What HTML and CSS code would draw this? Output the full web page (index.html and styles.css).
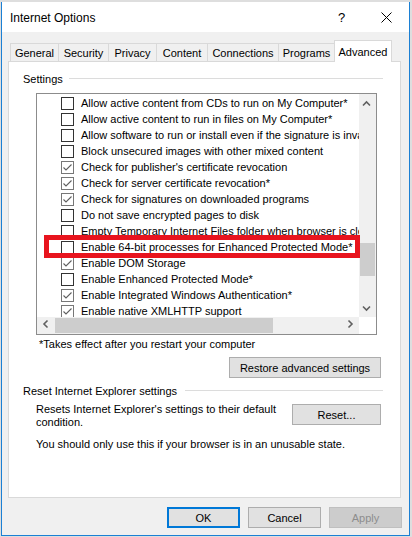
FILE: index.html
```html
<!DOCTYPE html>
<html lang="en">
<head>
<meta charset="utf-8">
<title>Internet Options</title>
<link rel="stylesheet" href="styles.css">
</head>
<body>
<div class="window">
  <div class="titlebar">
    <span class="title">Internet Options</span>
    <span class="cbtn help">?</span>
    <span class="cbtn close">
      <svg width="11" height="11" viewBox="0 0 11 11"><path d="M0.5 0.5 L10.5 10.5 M10.5 0.5 L0.5 10.5" stroke="#000" stroke-width="1" fill="none"/></svg>
    </span>
  </div>
  <div class="client">
    <div class="tabs">
      <div class="tab w-general">General</div>
      <div class="tab w-security">Security</div>
      <div class="tab w-privacy">Privacy</div>
      <div class="tab w-content">Content</div>
      <div class="tab w-connections">Connections</div>
      <div class="tab w-programs">Programs</div>
      <div class="tab active w-advanced">Advanced</div>
    </div>
    <div class="panel">
      <div class="group-head settings-head"><span>Settings</span><i class="rule"></i></div>
      <div class="listbox">
        <div class="list-main">
          <div class="items">
            <div class="item"><span class="cb"></span><span class="lbl">Allow active content from CDs to run on My Computer*</span></div>
            <div class="item"><span class="cb"></span><span class="lbl">Allow active content to run in files on My Computer*</span></div>
            <div class="item"><span class="cb"></span><span class="lbl">Allow software to run or install even if the signature is invalid</span></div>
            <div class="item"><span class="cb"></span><span class="lbl">Block unsecured images with other mixed content</span></div>
            <div class="item"><span class="cb checked"><svg width="11" height="11" viewBox="0 0 11 11"><path d="M1.5 5.5 L4 8 L9.5 2.5" stroke="#5f5f5f" stroke-width="1.1" fill="none"/></svg></span><span class="lbl">Check for publisher's certificate revocation</span></div>
            <div class="item"><span class="cb checked"><svg width="11" height="11" viewBox="0 0 11 11"><path d="M1.5 5.5 L4 8 L9.5 2.5" stroke="#5f5f5f" stroke-width="1.1" fill="none"/></svg></span><span class="lbl">Check for server certificate revocation*</span></div>
            <div class="item"><span class="cb checked"><svg width="11" height="11" viewBox="0 0 11 11"><path d="M1.5 5.5 L4 8 L9.5 2.5" stroke="#5f5f5f" stroke-width="1.1" fill="none"/></svg></span><span class="lbl">Check for signatures on downloaded programs</span></div>
            <div class="item"><span class="cb"></span><span class="lbl">Do not save encrypted pages to disk</span></div>
            <div class="item"><span class="cb"></span><span class="lbl">Empty Temporary Internet Files folder when browser is closed</span></div>
            <div class="item"><span class="cb"></span><span class="lbl">Enable 64-bit processes for Enhanced Protected Mode*</span></div>
            <div class="item"><span class="cb checked"><svg width="11" height="11" viewBox="0 0 11 11"><path d="M1.5 5.5 L4 8 L9.5 2.5" stroke="#5f5f5f" stroke-width="1.1" fill="none"/></svg></span><span class="lbl">Enable DOM Storage</span></div>
            <div class="item"><span class="cb"></span><span class="lbl">Enable Enhanced Protected Mode*</span></div>
            <div class="item"><span class="cb checked"><svg width="11" height="11" viewBox="0 0 11 11"><path d="M1.5 5.5 L4 8 L9.5 2.5" stroke="#5f5f5f" stroke-width="1.1" fill="none"/></svg></span><span class="lbl">Enable Integrated Windows Authentication*</span></div>
            <div class="item"><span class="cb checked"><svg width="11" height="11" viewBox="0 0 11 11"><path d="M1.5 5.5 L4 8 L9.5 2.5" stroke="#5f5f5f" stroke-width="1.1" fill="none"/></svg></span><span class="lbl">Enable native XMLHTTP support</span></div>
          </div>
          <div class="vscroll">
            <svg class="arrow" width="17" height="17" viewBox="0 0 17 17"><polyline points="4,11.5 7.5,8 11,11.5" stroke="#606060" stroke-width="1.6" fill="none"/></svg>
            <div class="vtrack"><div class="vthumb"></div></div>
            <svg class="arrow" width="17" height="17" viewBox="0 0 17 17"><polyline points="4,6.5 7.5,10 11,6.5" stroke="#606060" stroke-width="1.6" fill="none"/></svg>
          </div>
        </div>
        <div class="hrow">
          <div class="hscroll">
            <svg class="arrow" width="17" height="17" viewBox="0 0 17 17"><polyline points="10.5,3.5 7,7 10.5,10.5" stroke="#606060" stroke-width="1.6" fill="none"/></svg>
            <div class="htrack"><div class="hthumb"></div></div>
            <svg class="arrow" width="17" height="17" viewBox="0 0 17 17"><polyline points="6.5,3.5 10,7 6.5,10.5" stroke="#606060" stroke-width="1.6" fill="none"/></svg>
          </div>
          <div class="corner"></div>
        </div>
        <div class="highlight"></div>
      </div>
      <p class="note">*Takes effect after you restart your computer</p>
      <div class="restore-row"><button class="btn restore">Restore advanced settings</button></div>
      <div class="group-head reset-head"><span>Reset Internet Explorer settings</span><i class="rule"></i></div>
      <div class="reset-row">
        <p>Resets Internet Explorer's settings to their default condition.</p>
        <button class="btn reset-btn">Reset...</button>
      </div>
      <p class="warn">You should only use this if your browser is in an unusable state.</p>
    </div>
    <div class="footer">
      <button class="btn dlg ok">OK</button>
      <button class="btn dlg">Cancel</button>
      <button class="btn dlg apply">Apply</button>
    </div>
  </div>
</div>
</body>
</html>
```
FILE: styles.css
```css
* { box-sizing: border-box; }
html, body { margin: 0; padding: 0; }
body {
  width: 412px;
  height: 537px;
  overflow: hidden;
  background: #dedede;
  font-family: "Liberation Sans", Arial, sans-serif;
  font-size: 11px;
  color: #000;
}
.window {
  margin: 2px 0 0 1px;
  width: 409px;
  height: 534px;
  background: #f0f0f0;
  border: 1px solid #1c80d4;
  border-top: 0;
  display: flex;
  flex-direction: column;
}
.titlebar {
  height: 30px;
  flex: none;
  background: #fff;
  display: flex;
  align-items: center;
}
.title {
  flex: 1;
  font-size: 12px;
  padding: 2px 0 0 8px;
}
.cbtn {
  width: 45px;
  height: 30px;
  display: flex;
  align-items: center;
  justify-content: center;
  padding-top: 1px;
}
.help { font-size: 13px; }
.client {
  flex: 1;
  display: flex;
  flex-direction: column;
}
.tabs {
  display: flex;
  align-items: flex-end;
  height: 21px;
  margin: 8px 0 0 8px;
  position: relative;
  z-index: 1;
}
.tab {
  height: 18px;
  border: 1px solid #d9d9d9;
  border-bottom: 0;
  background: #f0f0f0;
  margin-left: -1px;
  display: flex;
  align-items: center;
  justify-content: center;
  white-space: nowrap;
}
.tab:first-child { margin-left: 0; }
.tab.active {
  height: 22px;
  background: #fff;
  margin-bottom: -1px;
}
.w-general { width: 49px; }
.w-security { width: 51px; }
.w-privacy { width: 49px; }
.w-content { width: 52px; }
.w-connections { width: 72px; }
.w-programs { width: 57px; }
.w-advanced { width: 58px; }
.panel {
  margin-left: 6px;
  width: 393px;
  height: 437px;
  flex: none;
  background: #fff;
  border: 1px solid #d9d9d9;
}
.group-head {
  display: flex;
  height: 14px;
  line-height: 14px;
  padding-left: 14px;
  margin-right: 17px;
  white-space: nowrap;
}
.group-head .rule {
  flex: 1;
  height: 1px;
  background: #dcdcdc;
  margin: 6px 0 0 6px;
}
.settings-head { margin-top: 10px; }
.reset-head { margin-top: 6px; }
.reset-head .rule { margin-left: 8px; }
.listbox {
  margin: 7px 0 0 27px;
  width: 341px;
  height: 242px;
  border: 1px solid #8c8c8c;
  position: relative;
  display: flex;
  flex-direction: column;
}
.list-main {
  display: flex;
  height: 223px;
  flex: none;
}
.items {
  width: 322px;
  overflow: hidden;
  padding-top: 1px;
}
.item {
  height: 16px;
  display: flex;
  align-items: center;
  padding-left: 24px;
  white-space: nowrap;
}
.lbl { flex: none; }
.cb {
  flex: none;
  width: 13px;
  height: 13px;
  border: 1px solid #333;
  background: #fff;
  margin-right: 7px;
  display: block;
}
.cb svg { display: block; }
.cb.checked { border-color: #777; }
.vscroll {
  width: 17px;
  background: #f0f0f0;
  display: flex;
  flex-direction: column;
}
.arrow { display: block; flex: none; }
.vtrack { flex: 1; }
.vthumb {
  margin: 132px 1px 0;
  height: 33px;
  background: #cdcdcd;
}
.hrow {
  display: flex;
  height: 17px;
  flex: none;
}
.hscroll {
  width: 322px;
  background: #f0f0f0;
  display: flex;
}
.htrack { flex: 1; }
.hthumb {
  margin: 1px 0 0 1px;
  width: 218px;
  height: 15px;
  background: #cdcdcd;
}
.corner { width: 17px; background: #fff; }
.highlight {
  position: absolute;
  left: 7px;
  top: 141px;
  width: 316px;
  height: 23px;
  border: 5px solid #e8141e;
}
.note {
  margin: 2px 0 0 30px;
  line-height: 14px;
}
.restore-row {
  display: flex;
  justify-content: flex-end;
  margin: 6px 19px 0 0;
}
.btn {
  height: 21px;
  border: 1px solid #adadad;
  background: #e1e1e1;
  font-family: inherit;
  font-size: 11px;
  color: #000;
  padding: 0;
  margin: 0;
}
.restore { width: 152px; }
.reset-row {
  display: flex;
  align-items: flex-start;
  margin: 5px 19px 0 27px;
}
.reset-row p {
  margin: 0;
  width: 252px;
  line-height: 13px;
}
.reset-btn {
  margin-left: auto;
  margin-top: 1px;
  width: 89px;
}
.warn {
  margin: 8px 0 0 27px;
  line-height: 14px;
}
.footer {
  display: flex;
  justify-content: flex-end;
  gap: 8px;
  margin: 9px 7px 0 0;
}
.dlg { width: 73px; }
.ok { border: 2px solid #0078d7; }
.apply {
  background: #cccccc;
  border-color: #bfbfbf;
  color: #8d8d8d;
}
```
